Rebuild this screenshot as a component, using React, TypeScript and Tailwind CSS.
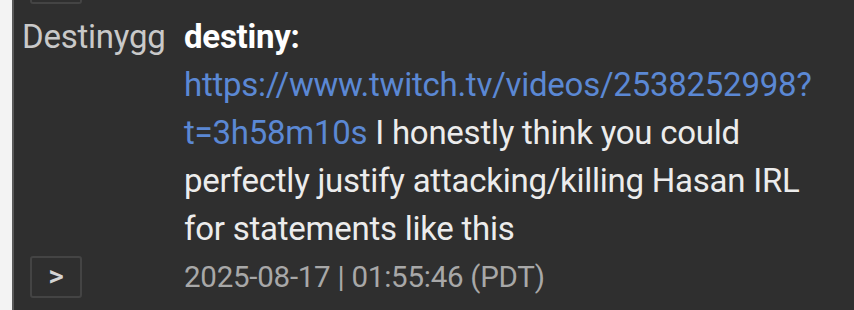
import React from 'react'

const font = { fontFamily: 'Roboto, "Noto Sans", sans-serif' }

function ExpandBox({ className = '' }: { className?: string }) {
  return (
    <div className={'flex h-[42px] w-[52px] items-center justify-center rounded-[3px] border-2 border-[#444] pb-[2px] text-[30px] font-medium text-[#d4d4d4] ' + className}>
      &gt;
    </div>
  )
}

export default function App() {
  return (
    <div className="flex h-[310px] w-[854px] overflow-hidden bg-[#2f2f2f]" style={font}>
      <div className="w-[12px] shrink-0 bg-[#f3f3f3]" />
      <div className="w-[2px] shrink-0 bg-[#5a5a5a]" />
      <div className="flex flex-1 flex-col">
        <div className="ml-[16px] h-[4px] w-[52px] rounded-b-[3px] border-x-2 border-b-2 border-[#444]" />
        <div className="mt-[9px] grid grid-cols-[170px_1fr] text-[33px] leading-[48px] tracking-[-0.25px]">
          <div className="pl-[8px] text-[#c9c9c9]">Destinygg</div>
          <div className="text-[#ececec]">
            <div className="font-bold text-white">destiny:</div>
            <div className="whitespace-nowrap">
              <span className="text-[#5b88d4]">https://www.twitch.tv/videos/2538252998?</span>
              <br />
              <span className="text-[#5b88d4]">t=3h58m10s</span> I honestly think you could
              <br />
              perfectly justify attacking/killing Hasan IRL
              <br />
              for statements like this
            </div>
          </div>
          <div className="flex items-center pl-[16px]">
            <ExpandBox />
          </div>
          <div className="text-[29.5px] text-[#a8a8a8]">2025-08-17 | 01:55:46 (PDT)</div>
        </div>
      </div>
    </div>
  )
}
